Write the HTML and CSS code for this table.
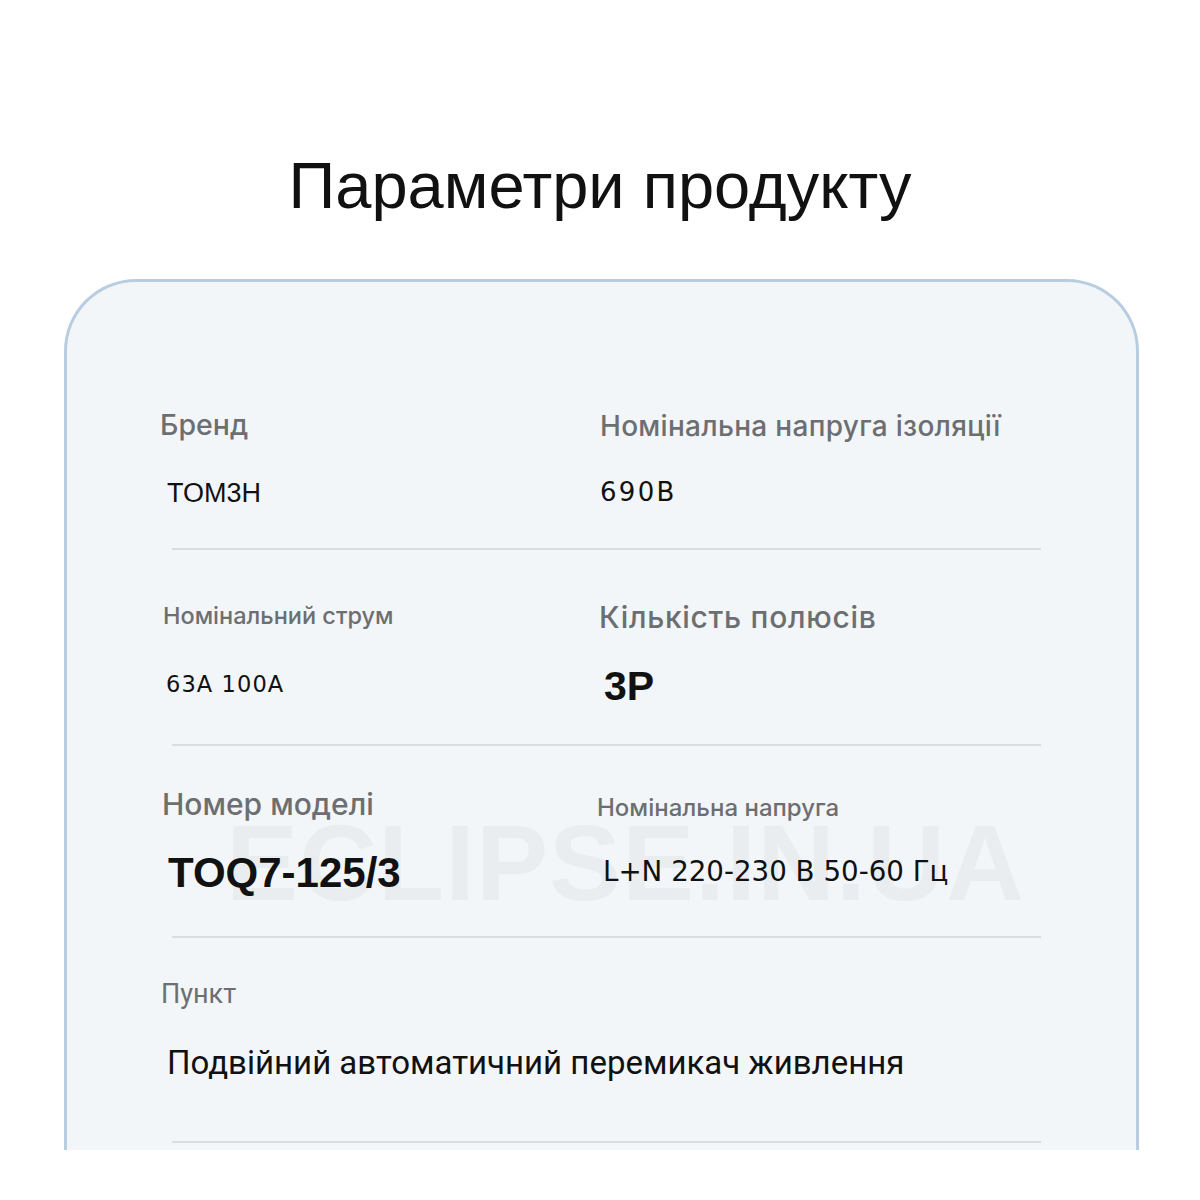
FILE: index.html
```html
<!DOCTYPE html>
<html lang="uk">
<head>
<meta charset="utf-8">
<title>Параметри продукту</title>
<link rel="stylesheet" href="styles.css">
</head>
<body>
<div class="page">
  <h1 class="title">Параметри продукту</h1>
  <section class="card">
    <div class="watermark">ECLIPSE.IN.UA</div>

    <div class="row row-1">
      <div class="cell">
        <div class="label l-brand">Бренд</div>
        <div class="value v-brand">TOM3H</div>
      </div>
      <div class="cell">
        <div class="label l-iso">Номінальна напруга ізоляції</div>
        <div class="value v-iso">690В</div>
      </div>
    </div>
    <div class="rule"></div>

    <div class="row row-2">
      <div class="cell">
        <div class="label l-current">Номінальний струм</div>
        <div class="value v-current">63A 100A</div>
      </div>
      <div class="cell">
        <div class="label l-poles">Кількість полюсів</div>
        <div class="value v-poles">3P</div>
      </div>
    </div>
    <div class="rule"></div>

    <div class="row row-3">
      <div class="cell">
        <div class="label l-model">Номер моделі</div>
        <div class="value v-model">TOQ7-125/3</div>
      </div>
      <div class="cell">
        <div class="label l-volt">Номінальна напруга</div>
        <div class="value v-volt">L+N 220-230 В 50-60 Гц</div>
      </div>
    </div>
    <div class="rule"></div>

    <div class="row row-4">
      <div class="cell cell-wide">
        <div class="label l-item">Пункт</div>
        <div class="value v-item">Подвійний автоматичний перемикач живлення</div>
      </div>
    </div>
    <div class="rule"></div>
  </section>
</div>
</body>
</html>
```

FILE: styles.css
```css
* { box-sizing: border-box; }
html, body {
  margin: 0;
  padding: 0;
  background: #ffffff;
}
.page {
  width: 1200px;
  height: 1200px;
  overflow: hidden;
  font-family: Inter, Roboto, sans-serif;
}
.title {
  margin: 0;
  padding-top: 153px;
  height: 279px;
  text-align: center;
  font-family: "Liberation Sans", Arial, sans-serif;
  font-weight: 400;
  font-size: 65px;
  line-height: 1;
  color: #111111;
}
.card {
  position: relative;
  margin-left: 64px;
  width: 1075px;
  height: 871px;
  background: #f3f6f8;
  border: 3px solid #b9cde1;
  border-bottom: none;
  border-radius: 72px 72px 0 0;
}
.watermark {
  position: absolute;
  left: 159px;
  top: 527px;
  font-family: "Liberation Sans", Arial, sans-serif;
  font-weight: 700;
  font-size: 108px;
  letter-spacing: 1px;
  line-height: 1;
  color: #e9edf0;
  white-space: nowrap;
  pointer-events: none;
}
.row {
  position: relative;
  display: grid;
  grid-template-columns: 440px 1fr;
  padding-left: 93px;
}
.cell {
  display: flex;
  flex-direction: column;
  align-items: flex-start;
}
.cell-wide { grid-column: 1 / span 2; }
.rule {
  height: 2px;
  margin-left: 105px;
  margin-right: 95px;
  background: #dadde0;
}
.label {
  line-height: 1;
  color: #6c6f72;
  font-family: Inter, Roboto, sans-serif;
  font-weight: 500;
  white-space: nowrap;
}
.value {
  line-height: 1;
  color: #111111;
  white-space: nowrap;
}

/* Row 1 */
.row-1 { height: 266px; padding-top: 129px; }
.l-brand { font-size: 28.5px; }
.v-brand {
  margin-top: 40px;
  margin-left: 7px;
  font-family: "Liberation Sans", Arial, sans-serif;
  font-size: 27px;
}
.l-iso { font-size: 28px; letter-spacing: 0.3px; margin-top: 1px; }
.v-iso {
  margin-top: 39px;
  font-family: "DejaVu Sans", sans-serif;
  font-size: 26px;
  letter-spacing: 2.3px;
}

/* Row 2 */
.row-2 { height: 194px; padding-top: 54px; }
.l-current { font-size: 23.5px; margin-left: 3px; }
.v-current {
  margin-top: 45px;
  margin-left: 6px;
  font-family: "DejaVu Sans", sans-serif;
  font-size: 22.5px;
  letter-spacing: 1.1px;
}
.l-poles { font-size: 30px; letter-spacing: 0.7px; margin-top: -2px; margin-left: -1px; }
.v-poles {
  margin-top: 34px;
  margin-left: 4px;
  font-family: "Liberation Sans", Arial, sans-serif;
  font-weight: 700;
  font-size: 41px;
}

/* Row 3 */
.row-3 { height: 190px; padding-top: 43px; }
.l-model { font-size: 30px; margin-left: 2px; }
.v-model {
  margin-top: 33px;
  margin-left: 8px;
  font-family: "Liberation Sans", Arial, sans-serif;
  font-weight: 700;
  font-size: 42px;
}
.l-volt { font-size: 24px; margin-top: 7px; margin-left: -3px; }
.v-volt {
  margin-top: 38px;
  margin-left: 3px;
  font-family: "DejaVu Sans", sans-serif;
  font-size: 27.7px;
}

/* Row 4 */
.row-4 { height: 203px; padding-top: 43px; }
.l-item { font-family: Roboto, sans-serif; font-weight: 400; font-size: 27px; margin-left: 1px; }
.v-item {
  margin-top: 38px;
  margin-left: 7px;
  font-family: Roboto, sans-serif;
  font-size: 33px;
}
```
